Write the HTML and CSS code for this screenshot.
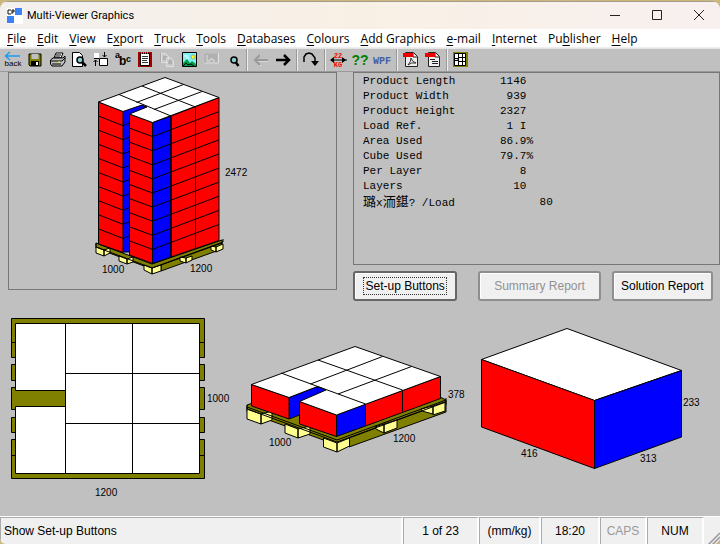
FILE: index.html
```html
<!DOCTYPE html>
<html lang="en">
<head>
  <title>Multi-Viewer Graphics</title>
  <meta charset="UTF-8" />
  <meta name="viewport" content="width=device-width, initial-scale=1.0"/>
  <link rel="stylesheet" href="styles.css">
</head>
<body>
  <div class="window">
    <header class="titlebar">
      <svg class="logo" width="16" height="16" viewBox="0 0 16 16">
        <rect width="16" height="16" fill="#fff"/>
        <path d="M8 0h7v7H8zM0 8h7v7H0z" fill="#3b82f6"/>
        <path d="M4 2H1v4h3M5 6V2h2v2H5" fill="none" stroke="#111"/>
      </svg>
      <h1>Multi-Viewer Graphics</h1>
      <div class="window-buttons">
        <button aria-label="Minimize"><svg width="10" height="10" viewBox="0 0 10 10"><path d="M0 5.500h10"/></svg></button>
        <button aria-label="Maximize"><svg width="10" height="10" viewBox="0 0 10 10"><path d="M.5 .5h9v9h-9z"/></svg></button>
        <button aria-label="Close"><svg width="10" height="10" viewBox="0 0 10 10"><path d="M0 0l10 10M10 0L0 10"/></svg></button>
      </div>
    </header>

    <nav class="menu">
      <button><u>F</u>ile</button>
      <button><u>E</u>dit</button>
      <button><u>V</u>iew</button>
      <button>E<u>x</u>port</button>
      <button><u>T</u>ruck</button>
      <button><u>T</u>ools</button>
      <button><u>D</u>atabases</button>
      <button><u>C</u>olours</button>
      <button><u>A</u>dd Graphics</button>
      <button><u>e</u>-mail</button>
      <button><u>I</u>nternet</button>
      <button>Pu<u>b</u>lisher</button>
      <button><u>H</u>elp</button>
    </nav>

    <div class="toolbar">
      <button aria-label="Back"><svg viewBox="0 0 22 22">
        <path d="M3 7h15M8 3L3.500 7 8 11" fill="none" stroke="#1e9bf0" stroke-width="1.500"/>
        <text x="11" y="17" class="back-text">back</text>
      </svg></button>
      <button aria-label="Save"><svg viewBox="0 0 22 22">
        <path d="M5 5h12v12H6l-1-1z" fill="#808000" stroke="#000"/>
        <path d="M7.500 5h7v5h-7z" fill="#c0c0c0"/><path d="M7 12h8v5H7z" fill="#000"/><path d="M12 13h2v3h-2z" fill="#fff"/>
      </svg></button>
      <button aria-label="Print"><svg viewBox="0 0 22 22">
        <path d="M8 9l2-5h7l-2 5z" fill="#fff" stroke="#000"/>
        <path d="M4.500 11L7 9h10l2-2v6l-3 4H6l-1.500-2z" fill="#c0c0c0" stroke="#000"/>
        <path d="M5 12h11l3-3M6 15h9M10 6h5M9 8h5" stroke="#000" fill="none"/><path d="M12 13h2" stroke="#ff0"/>
      </svg></button>
      <button aria-label="Print preview"><svg viewBox="0 0 22 22">
        <path d="M4.500 3.500h7l3 3v11h-10z" fill="#fff" stroke="#000"/>
        <circle cx="12" cy="11" r="3" fill="#8cc" stroke="#000" stroke-width="1.500"/>
        <path d="M14 13l4 4" stroke="#000" stroke-width="2.500"/>
      </svg></button>
      <button aria-label="Arrange"><svg viewBox="0 0 22 22">
        <path d="M4 4h5v5H4z" fill="#fff"/><path d="M9.500 9.500h8v7h-8z" fill="#fff" stroke="#000"/>
        <path d="M14.500 3v5M12.500 6l2 2 2-2M5.500 17v-6M3.500 13l2-2 2 2M4 9.500h5" fill="none" stroke="#000"/>
      </svg></button>
      <button aria-label="Text"><svg viewBox="0 0 22 22">
        <text x="3" y="9" class="abc">a</text><text x="7" y="16" class="abc big">b</text><text x="14" y="13" class="abc">c</text>
      </svg></button>
      <button aria-label="Report"><svg viewBox="0 0 22 22">
        <path d="M4 3h14v15H4z" fill="#a00000"/><path d="M6.500 4.500h9v12h-9z" fill="#fff" stroke="#000"/>
        <path d="M8 7.500h6M8 9.500h6M8 11.500h5M8 13.500h6" stroke="#333"/><path d="M7 4h8" stroke="#fff" stroke-dasharray="1 1"/>
      </svg></button>
      <button aria-label="Copy" disabled><svg viewBox="0 0 22 22">
        <path d="M5.500 4.500h4l3 3v6h-7zM10.500 8.500h4l3 3v6h-7z" fill="#c8c8c8" stroke="#e0e0e0"/>
        <path d="M7 8h4M7 10h3M12 12h4M12 14h4" stroke="#999"/><path d="M4.500 4v9" stroke="#aaa"/>
      </svg></button>
      <button aria-label="Picture"><svg viewBox="0 0 22 22">
        <path d="M4.500 3.500h14v14h-14z" fill="#7ff0f8" stroke="#000"/>
        <path d="M5 17v-3l4-4 3 4 2-2 4 3v2z" fill="#00a040"/><path d="M5 17l3-3 2 2 3-1 3 2" fill="none" stroke="#003"/>
        <circle cx="15" cy="8" r="2" fill="#ff0" stroke="#777" stroke-width=".5"/><path d="M6 7h4M8 9h3" stroke="#fff"/>
      </svg></button>
      <button aria-label="Layout" disabled><svg viewBox="0 0 22 22">
        <path d="M4.500 4.500h13v9h-13z" fill="#b0b0b0"/><path d="M5 14h13.500V4M7 6v6h3v-2h3v2h2" fill="none" stroke="#e0e0e0"/>
      </svg></button>
      <button aria-label="Zoom"><svg viewBox="0 0 22 22">
        <circle cx="12" cy="11" r="3" fill="#8cc" stroke="#000" stroke-width="1.500"/><path d="M13.500 13l3 4" stroke="#000" stroke-width="2.500"/>
      </svg></button>
      <span class="sep"></span>
      <button aria-label="Previous" disabled><svg viewBox="0 0 22 22">
        <path d="M5 12h13M11 6l-5.500 5.500L11 17" fill="none" stroke="#eee"/>
        <path d="M5 11h13M10 6l-5 5 5 5" fill="none" stroke="#999" stroke-width="2"/>
      </svg></button>
      <button aria-label="Next"><svg viewBox="0 0 22 22">
        <path d="M4 11h13M12 6l5 5-5 5" fill="none" stroke="#000" stroke-width="2.500"/>
      </svg></button>
      <span class="sep"></span>
      <button aria-label="Rotate"><svg viewBox="0 0 22 22">
        <path d="M4 13V8l2-3 3-1 3 1 3 4v5" fill="none" stroke="#000" stroke-width="1.500"/><path d="M11 12h8l-4 5z"/>
      </svg></button>
      <span class="sep"></span>
      <button aria-label="Weight"><svg viewBox="0 0 22 22">
        <path d="M3 11h16" stroke="#000"/><path d="M2 11l4-3v6zM18 11l-4-3v6z"/>
        <text x="10" y="9" class="weight">22</text><text x="10" y="18" class="weight">KG</text>
      </svg></button>
      <button aria-label="Query"><svg viewBox="0 0 22 22"><text x="10" y="16" class="query">??</text></svg></button>
      <button aria-label="WPF"><svg viewBox="0 0 22 22"><text x="10" y="15" class="wpf">WPF</text></svg></button>
      <span class="sep"></span>
      <button aria-label="PDF"><svg viewBox="0 0 22 22">
        <path d="M5.500 3.500h8l4 4v10h-12z" fill="#eee" stroke="#222"/><path d="M13 4v4h4" fill="none" stroke="#222"/>
        <path d="M3 4h10v4H3z" fill="#e00"/><path d="M8 16q3-3 3-7 1 4 5 5-5-1-8 2z" fill="none" stroke="#333"/>
      </svg></button>
      <button aria-label="PDF report"><svg viewBox="0 0 22 22">
        <path d="M6.500 3.500h7l4 4v10h-11z" fill="#eee" stroke="#222"/><path d="M13 4v4h4" fill="none" stroke="#222"/>
        <path d="M3 4h10v4H3z" fill="#e00"/><path d="M8 10.500h5M10 12.500h6M10 14.500h6" stroke="#222"/>
      </svg></button>
      <span class="sep"></span>
      <button aria-label="Plan view"><svg viewBox="0 0 22 22">
        <path d="M3 3h15v15H3z" fill="#808000"/><path d="M4.500 4.500h11v12h-11z" fill="#fff" stroke="#000"/>
        <path d="M8.500 4v13M12.500 4v13M8 8.500h8M8 12.500h8M4 9.500h4v2H4" fill="none" stroke="#000"/>
      </svg></button>
    </div>

    <main>
      <section class="top">
        <!-- drawings share one coordinate system, each viewBox is a window on it -->
        <div class="panel">
          <svg class="drawing" viewBox="9 73 327 216" role="img" aria-label="Complete load">
            <g class="pallet">
              <path class="deck" d="M96 243L152 264 222 240V245L152 269 96 248z"/>
              <path class="deck" d="M161 265L222 243V249L161 271z"/>
              <path class="block" d="M96 247l8 3v6l-8-3zM104 250l6-2v5l-6 3z"/>
              <path class="block" d="M119 256l8 3v5l-8-3zM127 259l6-2v5l-6 2z"/>
              <path class="block" d="M144 265l8 3v6l-8-4zM152 268l9-3v6l-9 3z"/>
              <path class="block" d="M180 257l6 1v5l-6-2zM186 258l6-2v4l-6 3z"/>
              <path class="block" d="M211 246l5 1v5l-5-2zM216 247l7-3v5l-7 3z"/>
              <path class="edge" d="M96 243v4l56 21 71-26v-3"/>
            </g>
            <path class="blue" d="M122.500 111L145 103V252H122.500z"/>
            <path class="red" d="M98.500 102l24.500 9.500V252.500L98.500 244z"/>
            <path class="red" d="M129.500 114l23 8.500v141l-23-8.500z"/>
            <path class="blue" d="M152.500 122.500l18.500-6.500v141l-18.500 6.500z"/>
            <path class="red" d="M171 116l48-18.500v143L171 257z"/>
            <path class="top-face" d="M98.500 102L165 77.500 219 97.500 152.500 122.500 129.500 114 147 107 142 105 123 111.500z"/>
            <path class="line" d="M119 94.500L171 116V257M142 86L195.500 107V249M154 109.500L202 91.500M136.500 102.500L183.500 84.500"/>
            <g id="layers" class="line"></g>
            <text x="225" y="176">2472</text>
            <text x="102" y="273">1000</text>
            <text x="190" y="272">1200</text>
          </svg>
        </div>

        <div class="side">
          <div class="info">
            <table>
              <tr><th scope="row">Product Length</th><td>1146</td></tr>
              <tr><th scope="row">Product Width</th><td> 939</td></tr>
              <tr><th scope="row">Product Height</th><td>2327</td></tr>
              <tr><th scope="row">Load Ref.</th><td> 1 I</td></tr>
              <tr><th scope="row">Area Used</th><td>86.9%</td></tr>
              <tr><th scope="row">Cube Used</th><td>79.7%</td></tr>
              <tr><th scope="row">Per Layer</th><td>   8</td></tr>
              <tr><th scope="row">Layers</th><td>  10</td></tr>
              <tr><th scope="row"><span class="cjk">璐</span>x<span class="cjk">洏鍖</span>? /Load</th><td>      80</td></tr>
            </table>
          </div>
          <div class="actions">
            <button class="btn focused"><span>Set-up Buttons</span></button>
            <button class="btn" disabled>Summary Report</button>
            <button class="btn">Solution Report</button>
          </div>
        </div>
      </section>

      <section class="bottom">
        <svg class="drawing" viewBox="0 301 240 215" role="img" aria-label="Layer plan">
          <g class="plan">
            <path d="M11.500 318.500h193v39h-6v-34h-182v34h-5zM11.500 478.500h193v-39h-6v34h-182v-34h-5z"/>
            <path d="M11.500 342.500h5M199.500 342.500h5M11.500 455.500h5M199.500 455.500h5"/>
            <path d="M11.500 364.500h5v16h-5zM11.500 387.500h54v22h-54zM11.500 417.500h5v15h-5z"/>
            <path d="M199.500 364.500h5v16h-5zM199.500 387.500h5v22h-5zM199.500 417.500h5v15h-5z"/>
          </g>
          <path class="top-face" d="M15.500 323.500h50v67h-50zM15.500 406.500h50v67h-50zM65.500 323.500h134v150h-134z"/>
          <path class="line" d="M132.500 323v151M65 373.500h135M65 423.500h135"/>
          <text x="207" y="402">1000</text>
          <text x="95" y="496">1200</text>
        </svg>

        <svg class="drawing" viewBox="240 301 235 215" role="img" aria-label="Single layer">
          <g class="pallet">
            <path class="deck" d="M247 405L289 390 440 397 446 400V405L337 445 247 412z"/>
            <path class="deck" d="M349 438L446 402V412L349 447z"/>
            <path class="block" d="M247 409l14 5v10l-14-5zM261 414l11-3v9l-11 4z"/>
            <path class="block" d="M285 424l13 5v9l-13-5zM298 429l12-3v8l-12 4z"/>
            <path class="block" d="M323.500 438l13.500 5v9l-13.500-5zM337 443l12.500-5v8l-12.500 6z"/>
            <path class="block" d="M375 427l9-3v9l-8-4zM384 424l13-4v8l-13 5z"/>
            <path class="block" d="M421 409l12-3v8l-11-3zM433 406l12-4v9l-12 4z"/>
            <path class="edge" d="M247 405v4l90 33 109-40v-4M247 407l90 33 109-40"/>
          </g>
          <path class="blue" d="M289 397.500L317.500 386.500 326 390V396L299.500 408V415L289 419z"/>
          <path class="line" d="M317.500 386.500v6"/>
          <path class="red" d="M251.500 384.500L289 397.500V419L251.500 406z"/>
          <path class="red" d="M299.500 401.500L336.500 415V436.500L299.500 424z"/>
          <path class="blue" d="M336.500 415L365.500 404V426L336.500 436.500z"/>
          <path class="red" d="M365.500 404L440.500 376.500V398.500L365.500 426z"/>
          <path class="top-face" d="M251.500 384.500L355 346.500 440.500 376.500 336.500 415 299.500 401.500 326 390 317.500 386.500 289 397.500z"/>
          <path class="line" d="M281 373L365.500 404M318 360L402.500 390V411.500M338 394L411.500 366.500M310.500 384L382.500 356.500"/>
          <text x="448" y="398">378</text>
          <text x="269" y="446">1000</text>
          <text x="393" y="442">1200</text>
        </svg>

        <svg class="drawing" viewBox="475 301 245 215" role="img" aria-label="Product">
          <path class="top-face" d="M481.500 359.500L567 328.500 681.500 370.500 594.500 400.500z"/>
          <path class="red" d="M481.500 359.500L594.500 400.500V468.500L481.500 427z"/>
          <path class="blue" d="M594.500 400.500L681.500 370.500V437L594.500 468.500z"/>
          <text x="683" y="406">233</text>
          <text x="521" y="457">416</text>
          <text x="640" y="462">313</text>
        </svg>
      </section>
    </main>

    <footer class="status">
      <div class="message">Show Set-up Buttons</div>
      <div>1 of 23</div>
      <div>(mm/kg)</div>
      <div>18:20</div>
      <div class="off">CAPS</div>
      <div>NUM</div>
      <svg class="grip" width="13" height="13" viewBox="0 0 13 13"><path d="M1 13L13 1M5 13l8-8M9 13l4-4" stroke="#999" stroke-width="1.500"/></svg>
    </footer>
  </div>

<script>
  // seams between the ten layers of the load
  const layers = document.getElementById('layers');
  const layerHeight = 14.1;
  let seams = '';
  for (let i = 1; i < 10; i++) {
    const y = i * layerHeight;
    seams += `<path d="M98.5 ${102 + y}L123 ${111.5 + y}M123 ${111.5 + y}L129.5 ${109 + y}M129.5 ${114 + y}L152.5 ${122.5 + y}L219 ${97.5 + y}"/>`;
  }
  layers.innerHTML = seams;
</script>
</body>
</html>
```
FILE: styles.css
```css
* {
  box-sizing: border-box;
}
body {
  margin: 0;
  font-family: "Liberation Sans", Arial, sans-serif;
  font-size: 12px;
  color: #000;
  background-color: #cdb87c;
}
button {
  font: inherit;
  color: inherit;
  padding: 0;
  border: none;
  background: none;
}
.window {
  display: flex;
  flex-direction: column;
  min-height: 100vh;
  border-top: 1px solid #cdb87c;
  border-radius: 9px 9px 6px 6px;
  background-color: #c0c0c0;
  overflow: hidden;
}

.titlebar {
  display: flex;
  align-items: center;
  height: 28px;
  padding-left: 7px;
  border-top: 1px solid #a39c8c;
  background: linear-gradient(90deg, #f3f0ef, #f9f0e5 50%, #f7f0ef);
}
.titlebar h1 {
  flex: 1;
  margin: 0 0 0 4px;
  font-family: Roboto, sans-serif;
  font-size: 11px;
  font-weight: 400;
}
.window-buttons {
  display: flex;
}
.window-buttons button {
  width: 42px;
  height: 26px;
}
.window-buttons svg {
  fill: none;
  stroke: #222;
}

.menu {
  display: flex;
  gap: 1px;
  height: 19px;
  padding-left: 2px;
  background-color: #fff;
  font-family: "Open Sans", sans-serif;
  border-bottom: 1px solid #eee;
}
.menu button {
  padding: 0 5px;
  line-height: 20px;
}
.menu u {
  text-underline-offset: 2px;
}

.toolbar {
  display: flex;
  align-items: center;
  height: 24px;
  padding-left: 2px;
  border-top: 1px solid #e4e4e4;
  border-bottom: 1px solid #999;
}
.toolbar button,
.toolbar svg {
  display: block;
  width: 22px;
  height: 22px;
}
.sep {
  width: 2px;
  height: 22px;
  margin: 0 2px;
  border-left: 1px solid #999;
  border-right: 1px solid #eee;
}
.toolbar text {
  text-anchor: middle;
}
.back-text {
  font-size: 8px;
}
.toolbar .abc {
  font-size: 9px;
  font-weight: 700;
  text-anchor: start;
}
.toolbar .big {
  font-size: 12px;
}
.weight {
  font-family: "Liberation Mono", monospace;
  font-size: 7px;
  font-weight: 700;
  fill: #f00;
}
.query {
  font-size: 14px;
  font-weight: 700;
  fill: #008000;
}
.wpf {
  font-family: "Liberation Mono", monospace;
  font-size: 10px;
  font-weight: 700;
  fill: #4560a8;
}

main {
  flex: 1;
}
.top {
  display: grid;
  grid-template-columns: 329fr 367fr;
  column-gap: 16px;
  padding-left: 8px;
}
.panel,
.info {
  border: 1px solid #777;
}
.drawing {
  display: block;
  width: 100%;
}
.side {
  display: flex;
  flex-direction: column;
}
.info {
  flex: 1;
  padding: 1px 9px;
  font-family: "Liberation Mono", "Noto Sans CJK SC", monospace;
  font-size: 11px;
}
.info table {
  border-collapse: collapse;
}
.info th,
.info td {
  padding: 0;
  height: 15px;
  line-height: 15px;
  font-weight: 400;
  text-align: left;
  white-space: pre;
}
.info th {
  width: 137px;
}
.cjk {
  font-family: "Noto Sans CJK SC", sans-serif;
  font-size: 13px;
  line-height: 14px;
}
.actions {
  display: grid;
  grid-template-columns: 104fr 132fr 101fr;
  column-gap: 11px;
  padding: 6px 7px 0 0;
  margin-bottom: -11px;
}
.btn {
  height: 30px;
  border: 2px solid #8e8e8e;
  border-radius: 3px;
  background-color: #f0f0f0;
  box-shadow: inset 1px 1px #fff;
  white-space: nowrap;
}
.btn:disabled {
  margin-left: 10px;
  color: #909090;
}
.btn.focused {
  border-color: #666;
}
.btn.focused span {
  display: inline-block;
  padding: 1px;
  border: 1px dotted #333;
}

.bottom {
  display: grid;
  grid-template-columns: 240fr 235fr 245fr;
  padding-top: 11px;
}
.drawing text {
  font-size: 10px;
}
.drawing path {
  stroke: #000;
  stroke-linejoin: round;
}
.line,
.edge {
  fill: none;
}
.red { fill: #f00; }
.blue { fill: #00f; }
.top-face { fill: #fff; }
.plan,
.deck {
  fill: #808000;
}
.block {
  fill: #ffff90;
}

.status {
  display: grid;
  grid-template-columns: 1fr 76px 62px 59px 47px 57px 16px;
  height: 28px;
  border-top: 1px solid #fff;
  background-color: #f0f0f0;
}
.status div {
  border-top: 1px solid #aaa;
  border-left: 1px solid #aaa;
  border-right: 2px solid #fff;
  line-height: 27px;
  text-align: center;
}
.status .message {
  padding-left: 3px;
  text-align: left;
}
.status .off {
  color: #999;
}
.grip {
  align-self: end;
  justify-self: end;
}
```
